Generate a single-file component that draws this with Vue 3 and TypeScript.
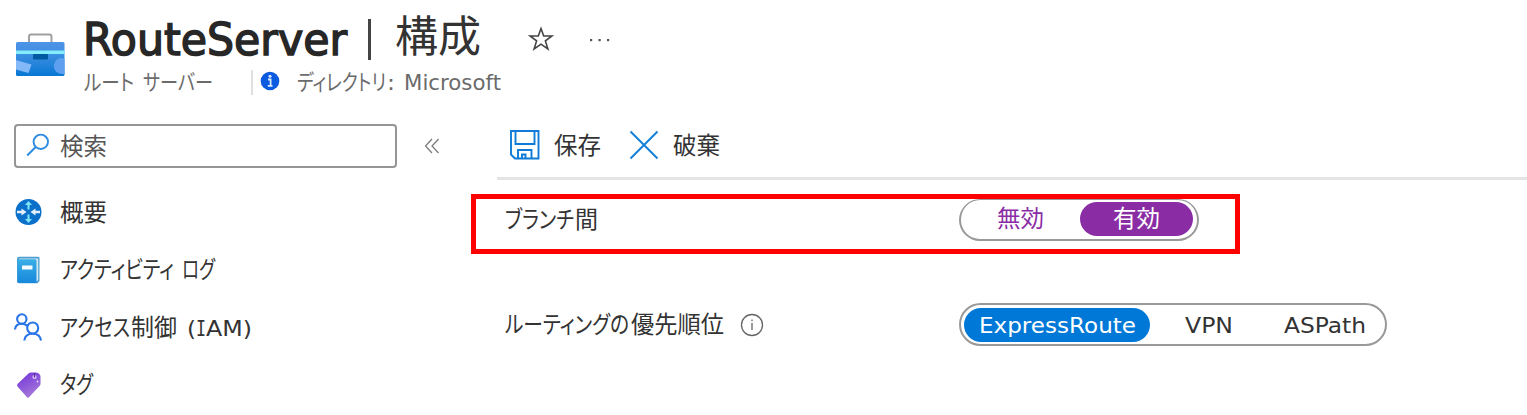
<script setup lang="ts">
import { h, type FunctionalComponent } from 'vue'

// A run is [text, x offset, width, optional class]
type Run = [string, number, number, string?]

// Text line whose runs are fitted to the narrow UI kana widths
const Line: FunctionalComponent<{ runs: Run[]; size: number }> = (props) => {
  const last = props.runs[props.runs.length - 1]
  return h(
    'svg',
    { width: last[1] + last[2], height: props.size, style: { overflow: 'visible', flex: 'none', display: 'block' } },
    props.runs.map(([text, x, w, cls]) =>
      h('text', {
        x, y: props.size * 0.86, textLength: w, lengthAdjust: 'spacingAndGlyphs',
        'font-size': cls ? props.size * 0.94 : props.size,
        'font-family': cls === 'mono' ? 'DejaVu Sans Mono, monospace' : cls === 'latin' ? 'DejaVu Sans, sans-serif' : 'Noto Sans CJK JP, sans-serif',
        style: { fontFeatureSettings: cls ? 'normal' : '"palt"' },
        fill: 'currentColor',
      }, text),
    ),
  )
}
Line.props = ['runs', 'size']

const menu: { icon: string; runs: Run[] }[] = [
  { icon: 'overview', runs: [['概要', 0, 47]] },
  { icon: 'log', runs: [['アクティビティ', 0, 114], ['ログ', 122, 33]] },
  { icon: 'people', runs: [['アクセス', 0, 70], ['制御', 71, 46], ['(', 127, 9, 'latin'], ['I', 136, 10, 'mono'], ['AM)', 146, 46, 'latin']] },
  { icon: 'tag', runs: [['タグ', 0, 33]] },
]
</script>

<template>
  <div class="page">
    <header class="head">
      <svg class="box" width="50" height="46" viewBox="0 0 50 46">
        <defs>
          <linearGradient id="case" x1="0" y1="0" x2="0" y2="1"><stop offset="0" stop-color="#4f94e8" /><stop offset=".4" stop-color="#3a8de0" /><stop offset="1" stop-color="#0878d4" /></linearGradient>
        </defs>
        <path d="M14 11V4.500Q14 2.500 16 2.500H34.500Q36.500 2.500 36.500 4.500V11" fill="none" stroke="#a0a0a0" stroke-width="2" />
        <rect x="1" y="10" width="48.500" height="34" rx="1.500" fill="url(#case)" />
        <path d="M1 28L16.500 32.500L13.500 41L1 37.500Z" fill="#83b9f9" />
        <path d="M49.500 26.500A8 8 0 1 0 47 42H49.500Z" fill="#5ea0ef" />
        <rect x="1" y="18.500" width="48.500" height="3.500" fill="#83ecfb" />
        <rect x="18" y="22" width="15" height="5.500" rx="1" fill="#005ba1" />
      </svg>
      <div class="heading">
        <div class="title">
          <span class="name"><Line :size="47" :runs="[['RouteServer', 0, 264, 'latin']]" /></span>
          <i class="bar" />
          <Line class="page-name" :size="43.500" :runs="[['構成', 0, 86]]" />
          <svg class="star" width="26" height="26" viewBox="0 0 26 26"><path d="M13 2.500L15.700 10H24L17.400 14.900L19.900 23L13 18.200L6.100 23L8.600 14.900L2 10H10.300Z" fill="none" stroke="#444" stroke-width="1.600" /></svg>
          <svg class="more" width="22" height="4" viewBox="0 0 22 4" fill="#555"><rect x="1" y="1" width="2.200" height="2.200" /><rect x="9.500" y="1" width="2.200" height="2.200" /><rect x="18" y="1" width="2.200" height="2.200" /></svg>
        </div>
        <div class="sub">
          <Line :size="22" :runs="[['ルート', 0, 50], ['サーバー', 59, 70]]" />
          <i class="sep" />
          <svg class="badge" width="20" height="20" viewBox="0 0 20 20"><circle cx="10" cy="10" r="9.300" fill="#0b5be0" /><path d="M8 8.500H10.600V14.500M7.800 14.800H12.500" fill="none" stroke="#dce9ff" stroke-width="1.800" /><circle cx="10" cy="5.300" r="1.500" fill="#dce9ff" /></svg>
          <Line :size="22" :runs="[['ディレクトリ', 0, 89], [':', 90, 8, 'latin'], ['Microsoft', 107, 97, 'latin']]" />
        </div>
      </div>
    </header>

    <div class="body">
      <nav class="side">
        <div class="search-row">
          <div class="search">
            <svg width="24" height="24" viewBox="0 0 24 24" fill="none" stroke="#2d8be0" stroke-width="1.900"><circle cx="14.800" cy="8.800" r="7.200" /><path d="M9.700 14L1.200 22.500" /></svg>
            <Line :size="23.500" :runs="[['検索', 0, 47]]" />
          </div>
          <svg class="collapse" width="16" height="16" viewBox="0 0 16 16" fill="none" stroke="#777" stroke-width="1.200"><path d="M8 1L1.500 8L8 15M14.500 1L8 8L14.500 15" /></svg>
        </div>
        <ul class="menu">
          <li v-for="item in menu" :key="item.icon">
            <svg class="mi" width="28" height="28" viewBox="0 0 28 28">
              <g v-if="item.icon === 'overview'">
                <circle cx="14.500" cy="14" r="13" fill="#0b70c9" />
                <path d="M14.500 11.500V5M14.500 16.500V23" stroke="#80e5f7" stroke-width="2" />
                <path d="M11 7L14.500 3L18 7ZM11 21L14.500 25L18 21Z" fill="#80e5f7" />
                <path d="M3 12.700H7.500V10.500L12.500 14L7.500 17.500V15.300H3ZM26 12.700H21.500V10.500L16.500 14L21.500 17.500V15.300H26Z" fill="#e3f0fa" />
              </g>
              <g v-else-if="item.icon === 'log'">
                <defs><linearGradient id="book" x1="0" y1="0" x2="0" y2="1"><stop offset="0" stop-color="#39afe6" /><stop offset="1" stop-color="#1788dc" /></linearGradient></defs>
                <path d="M5 .8H24Q25.500 .8 25.500 2.300V25L23.500 27.200H5Q3 27.200 3 25.200V2.800Q3 .8 5 .8Z" fill="#4c9fce" />
                <path d="M5 2.500H24.200V24L22.500 25.500H5Z" fill="#d4e9f5" />
                <path d="M3.500 3.200H21Q22.500 3.200 22.500 4.700V27H5Q3.500 27 3.500 25.500Z" fill="url(#book)" />
                <rect x="8" y="9.500" width="10.500" height="4" rx=".5" fill="#f5faff" />
              </g>
              <g v-else-if="item.icon === 'people'" fill="none" stroke="#2874e8" stroke-width="2.100">
                <circle cx="7.800" cy="6" r="4.700" />
                <path d="M1 16.500Q1.500 10.800 7.800 10.800Q11.500 10.800 13.200 13.200" />
                <circle cx="18.700" cy="15" r="5.500" />
                <path d="M10.300 27.500Q11 20.700 18.700 20.700Q26 20.700 27 27.500" />
              </g>
              <g v-else>
                <defs><linearGradient id="tag" x1="0" y1="0" x2=".5" y2="1"><stop offset="0" stop-color="#7130dc" /><stop offset="1" stop-color="#a478d8" /></linearGradient></defs>
                <path d="M3.500 13L14.500 2.500Q15.500 1.500 17 1.500H22Q26.500 2 26.500 6V12.500Q26.500 14 25.500 15L15 26.300Q14 27.300 13 26.300L3.500 15.500Q2.500 14 3.500 13Z" fill="url(#tag)" />
                <circle cx="20.500" cy="6" r="2.100" fill="#e0c8fb" /><path d="M20.500 2V6.500" stroke="#552f98" stroke-width="1.300" />
                <circle cx="23.500" cy="10.500" r="1" fill="#e5d5fa" />
              </g>
            </svg>
            <Line :size="23.500" :runs="item.runs" />
          </li>
        </ul>
      </nav>

      <main class="main">
        <div class="toolbar">
          <svg width="30" height="30" viewBox="0 0 30 30" fill="none" stroke="#0f7bd6" stroke-width="1.900"><path d="M1 1H28.500V28.500H5L1 24.500ZM5.500 1V14H24.500V1M8 28V20H21.500V28M12 28V24.500H15.500V28" /></svg>
          <Line class="save-text" :size="23.500" :runs="[['保存', 0, 47]]" />
          <svg class="cross" width="30" height="30" viewBox="0 0 30 30" stroke="#1680d8" stroke-width="2"><path d="M1.500 1.500L28.500 28.500M28.500 1.500L1.500 28.500" /></svg>
          <Line class="cancel-text" :size="23.500" :runs="[['破棄', 0, 47]]" />
        </div>
        <section class="field marked">
          <div class="label"><Line :size="23.500" :runs="[['ブランチ', 0, 69], ['間', 70, 23]]" /></div>
          <div class="pill branch">
            <span class="off"><Line :size="23.500" :runs="[['無効', 0, 47]]" /></span>
            <span class="on violet"><Line :size="23.500" :runs="[['有効', 0, 47]]" /></span>
          </div>
        </section>
        <section class="field routing">
          <div class="label">
            <Line :size="23.500" :runs="[['ルーティングの', 0, 124], ['優先順位', 126, 93]]" />
            <svg class="info" width="24" height="24" viewBox="0 0 24 24" fill="none" stroke="#666" stroke-width="1.300"><circle cx="12" cy="12" r="10.500" /><path d="M12 10V17M12 6.500V8.200" /></svg>
          </div>
          <div class="pill route">
            <span class="on blue"><Line :size="23.500" :runs="[['ExpressRoute', 0, 157, 'latin']]" /></span>
            <span class="vpn"><Line :size="23.500" :runs="[['VPN', 0, 48, 'latin']]" /></span>
            <span class="asp"><Line :size="23.500" :runs="[['ASPath', 0, 82, 'latin']]" /></span>
          </div>
        </section>
      </main>
    </div>
  </div>
</template>

<style scoped>
.page { width: 1527px; height: 415px; overflow: hidden; background: #fff; color: #333; }
.head { display: flex; height: 124px; box-sizing: border-box; padding-left: 15px; }
.box { margin-top: 32px; flex: none; }
.heading { margin-left: 19px; }
.title { display: flex; align-items: center; height: 66px; padding-top: 4px; box-sizing: border-box; }
.name { color: #272727; stroke: #272727; stroke-width: 1.5px; padding-top: 7px; margin-left: -1px; }
.bar { width: 3px; height: 41px; background: #444; margin: 8px 24px 0 21px; }
.page-name { margin-top: 4px; }
.star { margin: 8px 0 0 47px; }
.more { margin: 9px 0 0 35px; }
.sub { display: flex; align-items: center; height: 32px; color: #6b6b6b; }
.sep { width: 2px; height: 25px; margin: 0 7px 0 38px; background: #e0e0e0; }
.badge { margin: -2px 17px 0 0; }
.body { display: flex; }
.side { width: 471px; flex: none; }
.search-row { display: flex; align-items: center; height: 44px; padding-left: 14px; }
.search { display: flex; align-items: center; gap: 10px; width: 383px; height: 44px; box-sizing: border-box; border: 2px solid #979593; border-radius: 4px; padding: 2px 0 0 10px; color: #555; }
.search svg:first-child { margin-top: -4px; }
.collapse { margin: -1px 0 0 27px; }
.menu { list-style: none; margin: 15.5px 0 0; padding: 0 0 0 14px; }
.menu li { display: flex; align-items: center; gap: 18px; height: 57.5px; }
.main { flex: 1; }
.toolbar { display: flex; align-items: center; height: 53px; margin-left: 26px; padding: 0 0 14px 13px; box-sizing: border-box; border-bottom: 3px solid #e4e4e4; margin-top: 3px; }
.save-text { margin: 2px 0 0 14px; }
.cross { margin-left: 28px; }
.cancel-text { margin: 2px 0 0 14px; }
.field { display: flex; align-items: center; box-sizing: border-box; }
.label { width: 454px; display: flex; align-items: center; flex: none; }
.marked { margin-top: 14px; width: 769px; height: 60px; border: 5px solid #fe0000; padding: 0 0 9px 29px; }
.routing { margin-top: 49px; height: 43px; padding-left: 34px; }
.info { margin-left: 16px; }
.pill { display: flex; align-items: center; box-sizing: border-box; height: 43px; border: 2px solid #999; border-radius: 22px; padding: 0 4px; }
.on { display: flex; align-items: center; justify-content: center; height: 34px; border-radius: 17px; color: #fff; }
.branch { width: 240px; height: 42px; border-top-width: 1px; }
.off { color: #8a2da5; width: 115px; box-sizing: border-box; padding-left: 32px; }
.violet { background: #8a2da5; width: 113px; }
.route { width: 428px; padding: 0 3px; }
.blue { background: #0078d7; width: 186px; }
.vpn { margin-left: 35px; }
.asp { margin-left: 51px; }
</style>
